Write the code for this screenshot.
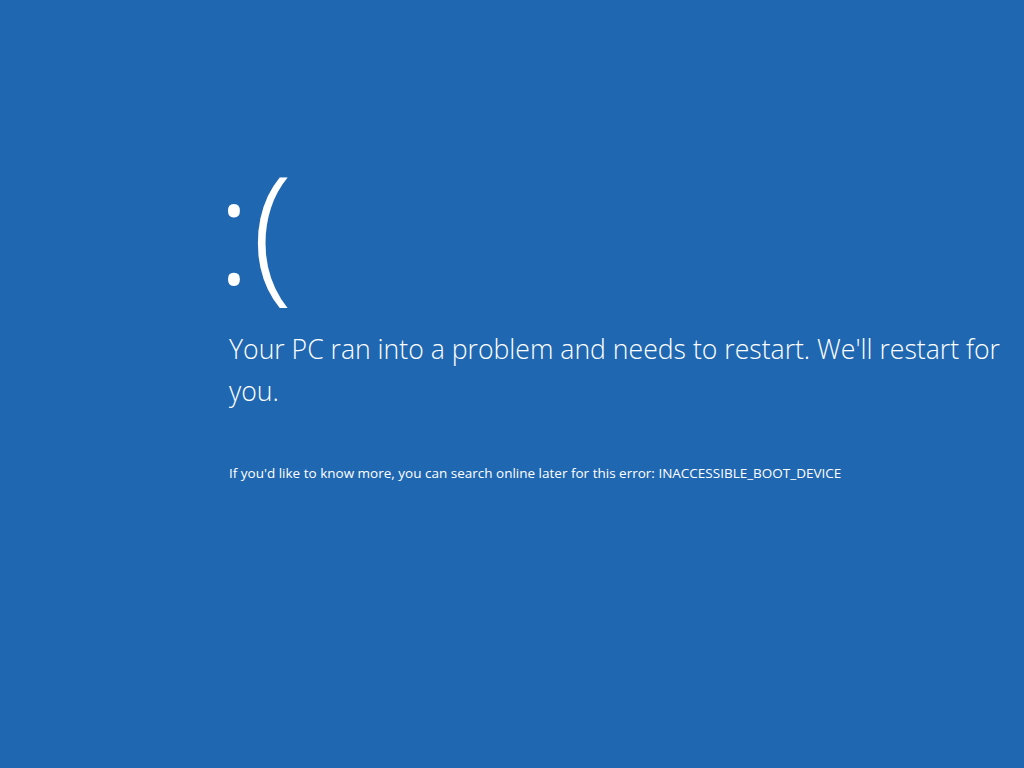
import React from 'react';

const App = () => {
  return (
    <div
      className="w-[1024px] h-[768px] bg-[#2067b2] text-white overflow-hidden"
      style={{ fontFamily: '"Open Sans", "Noto Sans", sans-serif' }}
    >
      <div className="pl-[216px] pt-[131px]">
        <div className="text-[150px] leading-[190px] font-light">:(</div>
        <p className="mt-[7px] pl-[13px] text-[26.6px] leading-[42px] font-light w-[800px]">
          Your PC ran into a problem and needs to restart. We'll restart for you.
        </p>
        <p className="mt-[52px] pl-[13px] text-[13.5px] leading-[18px]">
          If you'd like to know more, you can search online later for this error: INACCESSIBLE_BOOT_DEVICE
        </p>
      </div>
    </div>
  );
};

export default App;
